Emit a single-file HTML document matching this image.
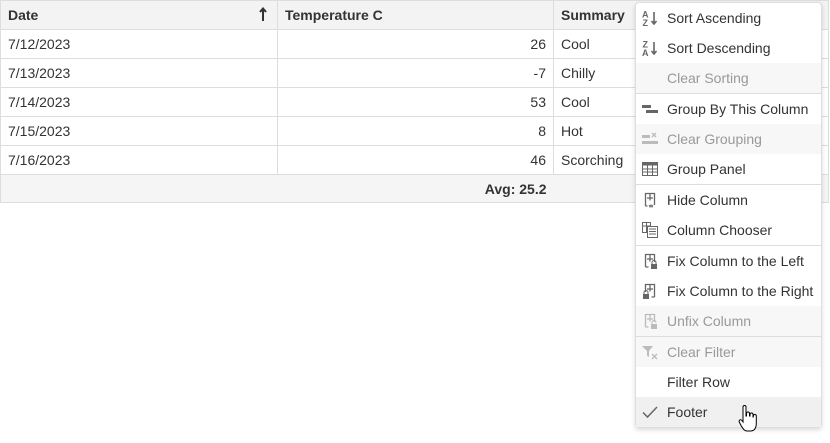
<!DOCTYPE html>
<html><head><meta charset="utf-8"><style>
*{box-sizing:border-box;margin:0;padding:0}
body{width:830px;height:443px;background:#fff;font-family:"Liberation Sans",sans-serif;font-size:14px;color:#333;position:relative;overflow:hidden}
table{position:absolute;left:0;top:0;width:829px;border-collapse:collapse;border:1px solid #ddd}
td,th{height:29px;border:1px solid #ddd;padding:0 7px;text-align:left;font-weight:normal;vertical-align:middle;line-height:16px}
th{background:#f3f3f3;font-weight:bold;color:#333;position:relative}
td.r{text-align:right}
tr.f td{background:#f5f5f5;border-left:none;border-right:none;height:28px}
.menu{position:absolute;left:635px;top:2px;width:187px;height:426px;background:#fff;border:1px solid #ddd;border-radius:4px;box-shadow:0 2px 5px rgba(0,0,0,.15)}
.it{height:30px;line-height:30px;padding-left:31px;position:relative;color:#333;white-space:nowrap}
.it.d{color:#999;background:#f7f7f7}
.it.h{background:#f0f0f0}
.sep{height:1px;background:#ddd}
.ic{position:absolute;left:6px;top:7px;width:16px;height:16px}
</style></head><body>
<table>
<tr><th style="width:277px">Date<svg style="position:absolute;right:10px;top:6px" width="8" height="15" viewBox="0 0 8 15"><path d="M4 14V2M1 5l3-3.5L7 5" stroke="#333" stroke-width="2" fill="none"/></svg></th><th style="width:276px">Temperature C</th><th>Summary</th></tr>
<tr><td>7/12/2023</td><td class="r">26</td><td>Cool</td></tr>
<tr><td>7/13/2023</td><td class="r">-7</td><td>Chilly</td></tr>
<tr><td>7/14/2023</td><td class="r">53</td><td>Cool</td></tr>
<tr><td>7/15/2023</td><td class="r">8</td><td>Hot</td></tr>
<tr><td>7/16/2023</td><td class="r">46</td><td>Scorching</td></tr>
<tr class="f"><td></td><td class="r" style="font-weight:bold">Avg: 25.2</td><td></td></tr>
</table>
<div class="menu">
<div class="it"><svg class="ic" viewBox="0 0 16 16"><text x="0" y="7.5" font-size="9" font-family="Liberation Sans" font-weight="bold" fill="#666">A</text><text x="0.5" y="16" font-size="9" font-family="Liberation Sans" font-weight="bold" fill="#666">Z</text><path d="M12 2v12M9.5 11l2.5 3 2.5-3" stroke="#666" stroke-width="1.6" fill="none"/></svg>Sort Ascending</div>
<div class="it"><svg class="ic" viewBox="0 0 16 16"><text x="0.5" y="7.5" font-size="9" font-family="Liberation Sans" font-weight="bold" fill="#666">Z</text><text x="0" y="16" font-size="9" font-family="Liberation Sans" font-weight="bold" fill="#666">A</text><path d="M12 2v12M9.5 11l2.5 3 2.5-3" stroke="#666" stroke-width="1.6" fill="none"/></svg>Sort Descending</div>
<div class="it d">Clear Sorting</div>
<div class="sep"></div>
<div class="it"><svg class="ic" viewBox="0 0 16 16"><rect x="0" y="4" width="9" height="3" fill="#666"/><rect x="4" y="9" width="12" height="3" fill="#666"/></svg>Group By This Column</div>
<div class="it d"><svg class="ic" viewBox="0 0 16 16"><rect x="0" y="4" width="8" height="3" fill="#bbb"/><rect x="0" y="10" width="16" height="3" fill="#bbb"/><path d="M10 2l4 4M14 2l-4 4" stroke="#bbb" stroke-width="1.3"/></svg>Clear Grouping</div>
<div class="it"><svg class="ic" viewBox="0 0 16 16"><rect x="0.5" y="1.5" width="15" height="13" fill="none" stroke="#666"/><rect x="0.5" y="1.5" width="15" height="3" fill="#666"/><path d="M5.5 4v10M10.5 4v10M1 8h14M1 11h14" stroke="#666"/></svg>Group Panel</div>
<div class="sep"></div>
<div class="it"><svg class="ic" viewBox="0 0 16 16"><path d="M3.5 14V1.5h9V13M3.5 14h2M5 6h6M8 1.5v7" stroke="#666" stroke-width="1.3" fill="none"/><path d="M7 13l1 2 1-2 1 2 1-2" stroke="#666" fill="none"/></svg>Hide Column</div>
<div class="it"><svg class="ic" viewBox="0 0 16 16"><path d="M0.5 0.5h8v10h-8zM0.5 4h8M4.5 0.5v10" stroke="#666" fill="none"/><rect x="5.5" y="4.5" width="10" height="11" fill="#fff" stroke="#666"/><path d="M7 7h7M7 9.5h7M7 12h7" stroke="#666"/></svg>Column Chooser</div>
<div class="sep"></div>
<div class="it"><svg class="ic" viewBox="0 0 16 16"><path d="M3.5 14V1.5h9V9M3.5 14h3M5 6h6M8 1.5v7" stroke="#666" stroke-width="1.3" fill="none"/><rect x="9" y="11" width="6" height="5" fill="#666"/><path d="M10 11V9.5a2 2 0 0 1 4 0V11" stroke="#666" fill="none"/></svg>Fix Column to the Left</div>
<div class="it"><svg class="ic" viewBox="0 0 16 16"><path d="M12.5 14V1.5h-9V9M12.5 14h-3M5 6h6M8 1.5v7" stroke="#666" stroke-width="1.3" fill="none"/><rect x="1" y="11" width="6" height="5" fill="#666"/><path d="M2 11V9.5a2 2 0 0 1 4 0V11" stroke="#666" fill="none"/></svg>Fix Column to the Right</div>
<div class="it d"><svg class="ic" viewBox="0 0 16 16"><path d="M3.5 14V1.5h9V9M3.5 14h3M5 6h6M8 1.5v7" stroke="#bbb" stroke-width="1.3" fill="none"/><rect x="9" y="11" width="6" height="5" fill="#bbb"/><path d="M10 11V9.5a2 2 0 0 1 4 0" stroke="#bbb" fill="none"/></svg>Unfix Column</div>
<div class="sep"></div>
<div class="it d"><svg class="ic" viewBox="0 0 16 16"><path d="M0 2h11L7 7v6l-2-1.5V7z" fill="#bbb"/><path d="M10 10l5 5M15 10l-5 5" stroke="#bbb" stroke-width="1.3"/></svg>Clear Filter</div>
<div class="it">Filter Row</div>
<div class="it h"><svg class="ic" viewBox="0 0 16 16"><path d="M1 8.5l4.5 4.5L15 3" stroke="#666" stroke-width="1.5" fill="none"/></svg>Footer</div>
</div>
<svg style="position:absolute;left:738px;top:405px" width="20" height="30" viewBox="0 0 20 30"><path d="M5 2a1.5 1.5 0 0 1 3 0v9h0.5v-2.5a1.5 1.5 0 0 1 3 0V11h.5V9.5a1.5 1.5 0 0 1 3 0V12h.3v-1a1.5 1.5 0 0 1 3 0v7c0 5-2 8-6 8h-3c-3 0-4-2-6-5l-2-4a1.5 1.5 0 0 1 2.6-1.5L5 17z" fill="#fff" stroke="#000" stroke-width="1"/></svg>
</body></html>
